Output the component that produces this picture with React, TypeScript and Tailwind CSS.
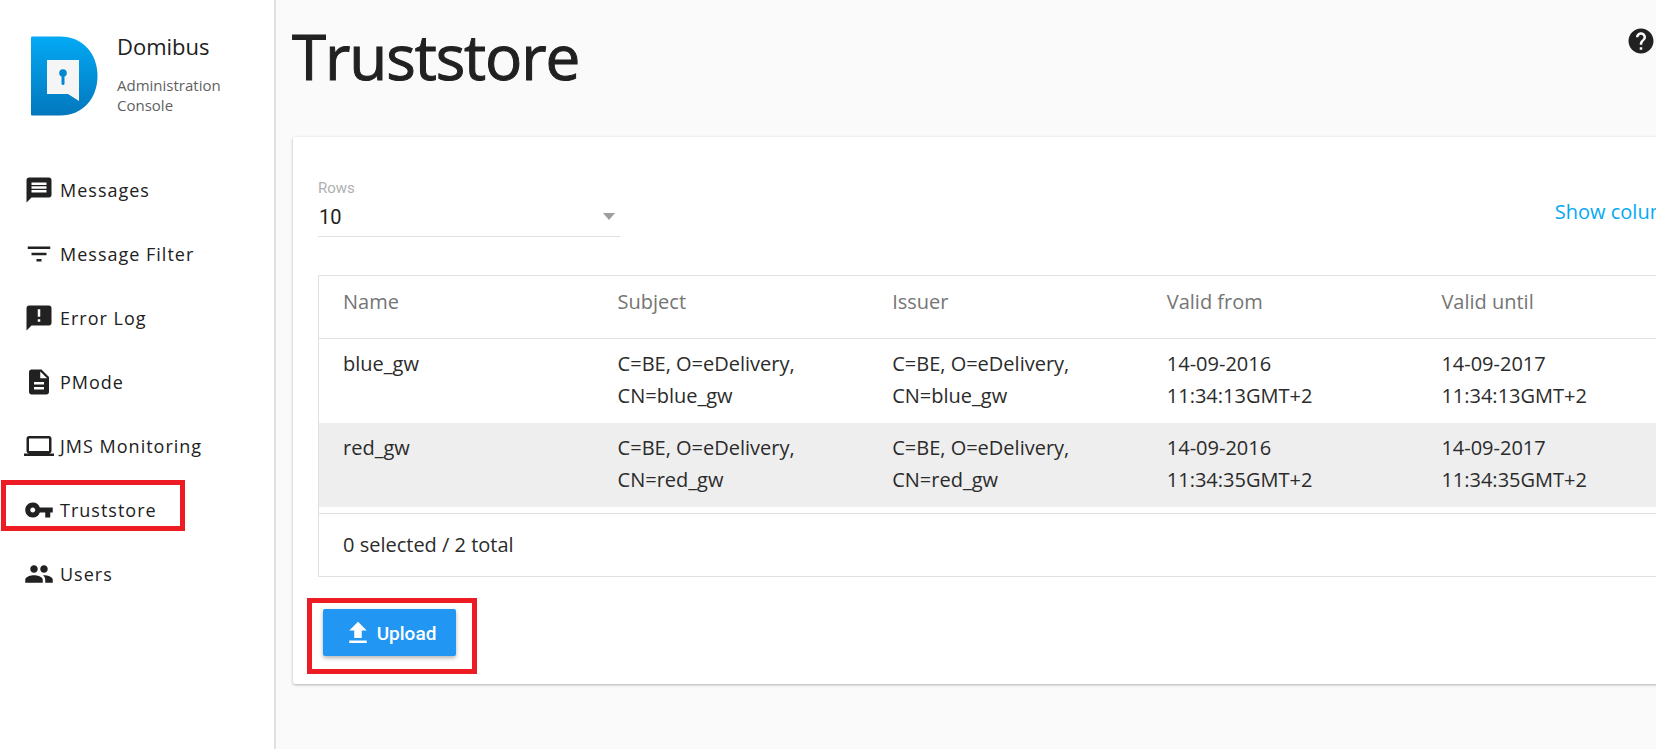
import { MdMessage, MdFilterList, MdAnnouncement, MdDescription, MdLaptop, MdVpnKey, MdPeople, MdHelp, MdFileUpload } from 'react-icons/md';

const navItems = [
  { label: 'Messages', icon: MdMessage },
  { label: 'Message Filter', icon: MdFilterList },
  { label: 'Error Log', icon: MdAnnouncement },
  { label: 'PMode', icon: MdDescription },
  { label: 'JMS Monitoring', icon: MdLaptop },
  { label: 'Truststore', icon: MdVpnKey },
  { label: 'Users', icon: MdPeople },
];

const columns = ['Name', 'Subject', 'Issuer', 'Valid from', 'Valid until'];

const rows = [
  { name: 'blue_gw', time: '11:34:13GMT+2', shaded: false },
  { name: 'red_gw', time: '11:34:35GMT+2', shaded: true },
];

function Logo() {
  return (
    <svg width="68" height="82" viewBox="0 0 68 82" className="shrink-0">
      <defs>
        <linearGradient id="logoFill" x1="0" y1="0" x2="0" y2="1">
          <stop offset="0" stopColor="#03a9f4" />
          <stop offset="1" stopColor="#0277bd" />
        </linearGradient>
      </defs>
      <path d="M1 2 C1 1 1.500 .5 2 .5 H30 C53 .5 67.500 18 67.500 40 C67.500 62 53 79.500 30 79.500 H2 C1.500 79.500 1 79 1 78 Z" fill="url(#logoFill)" />
      <path d="M17 24 H49 V65 L38 58 H17 Z" fill="#f5f5f5" />
      <circle cx="33" cy="37" r="3.800" fill="#0288d1" />
      <rect x="31.500" y="38" width="3" height="11" rx="1.500" fill="#0288d1" />
    </svg>
  );
}

function Sidebar() {
  return (
    <aside className="w-[276px] shrink-0 h-[749px] bg-white border-r-2 border-[#e0e0e0] overflow-hidden">
      <div className="flex pl-[30px] pt-[36px] h-[158px]">
        <Logo />
        <div className="ml-[19px]">
          <div className="text-[22px] leading-[24px] mt-[-2px] text-[#212121]">Domibus</div>
          <div className="text-[15px] leading-[20px] mt-[17px] text-[#616161]">
            Administration
            <br />
            Console
          </div>
        </div>
      </div>
      <nav className="flex flex-col">
        {navItems.map(({ label, icon: Icon }) => (
          <div key={label} className="flex items-center h-[64px] pl-[24px] text-[#212121]">
            <Icon size={30} className="shrink-0 w-[30px]" />
            <span className="ml-[6px] text-[18px] tracking-[1px]">{label}</span>
          </div>
        ))}
      </nav>
    </aside>
  );
}

function TruststoreTable() {
  return (
    <div className="w-[1400px] border border-[#e0e0e0] text-[20px] text-[#2b2b2b]">
      <div className="grid grid-cols-[274.600px_274.600px_274.600px_274.600px_1fr] h-[63px] items-center pl-[24px] border-b border-[#e0e0e0] text-[#757575] pb-[11px]">
        {columns.map(c => (
          <div key={c}>{c}</div>
        ))}
      </div>
      {rows.map(row => (
        <div
          key={row.name}
          className={`grid grid-cols-[274.600px_274.600px_274.600px_274.600px_1fr] h-[84px] pl-[24px] pt-[9px] leading-[32px] ${row.shaded ? 'bg-[#eeeeee]' : 'bg-white'}`}
        >
          <div>{row.name}</div>
          <div>
            C=BE, O=eDelivery,
            <br />
            CN={row.name}
          </div>
          <div>
            C=BE, O=eDelivery,
            <br />
            CN={row.name}
          </div>
          <div>
            14-09-2016
            <br />
            {row.time}
          </div>
          <div>
            14-09-2017
            <br />
            {row.time}
          </div>
        </div>
      ))}
      <div className="mt-[6px] h-[63px] flex items-center pl-[24px] pb-[1px] border-t border-[#e0e0e0]">0 selected / 2 total</div>
    </div>
  );
}

export default function App() {
  return (
    <div className="relative flex w-[1656px] h-[749px] overflow-hidden bg-[#fafafa] font-['Open_Sans',sans-serif]">
      <Sidebar />
      <main className="relative flex-1 min-w-0 pl-[16px]">
        <h1 className="h-[137px] pt-[13px] text-[62px] tracking-[-1.100px] leading-[86px] font-normal text-[#212121] [-webkit-text-stroke:1px_#212121]">Truststore</h1>
        <MdHelp size={30} className="absolute left-[1350px] top-[26px] text-[#212121]" />
        <section className="ml-[1px] w-[1500px] h-[547px] bg-white rounded-[2px] shadow-[0_1px_3px_rgba(0,0,0,0.3)] pt-[42px] pl-[25px]">
          <div className="flex justify-between w-[1372px] h-[96px]">
            <div className="w-[302px]">
              <div className="text-[15px] leading-[18px] text-[#b0b0b0] font-['Roboto',sans-serif]">Rows</div>
              <div className="flex items-center justify-between h-[40px] border-b border-[#e0e0e0] pl-[1px] pr-[5px] text-[20px] text-[#212121] font-['Roboto',sans-serif]">
                <span>10</span>
                <span className="w-0 h-0 border-x-[6px] border-t-[7px] border-x-transparent border-t-[#9e9e9e]" />
              </div>
            </div>
            <div className="text-[20px] leading-[24px] pt-[21px] text-[#03a9f4] whitespace-nowrap">Show columns</div>
          </div>
          <TruststoreTable />
          <button className="flex items-center justify-center mt-[32px] ml-[5px] w-[133px] h-[47px] rounded-[2px] bg-[#2196f3] text-white text-[19px] font-medium font-['Roboto',sans-serif] shadow-[0_2px_4px_rgba(0,0,0,0.3)]">
            <MdFileUpload size={30} className="mr-[2px]" />
            <span className="mt-[3px] ml-[2px]">Upload</span>
          </button>
        </section>
      </main>
      <div className="absolute left-[1px] top-[480px] w-[184px] h-[51px] border-[5px] border-[#ed1c24]" />
      <div className="absolute left-[307px] top-[598px] w-[170px] h-[76px] border-[5px] border-[#ed1c24]" />
    </div>
  );
}
